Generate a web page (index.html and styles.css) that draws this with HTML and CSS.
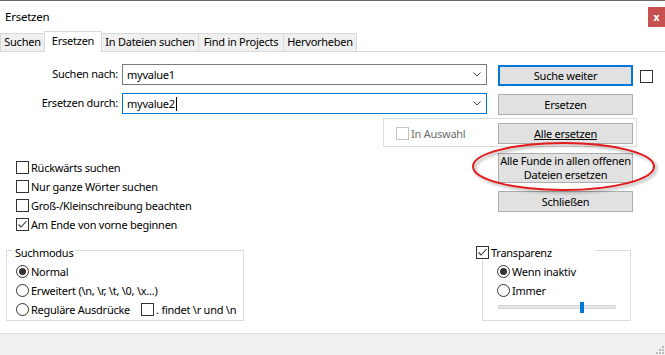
FILE: index.html
```html
<!DOCTYPE html>
<html lang="de">
<head>
<meta charset="utf-8">
<title>Ersetzen</title>
<link rel="stylesheet" href="styles.css">
</head>
<body>
<div class="window">
  <div class="topline"></div>
  <div class="titlebar">
    <span class="title">Ersetzen</span>
    <span class="close">x</span>
  </div>
  <div class="tabs">
    <div class="tab first w1">Suchen</div>
    <div class="tab active w2">Ersetzen</div>
    <div class="tab w3">In Dateien suchen</div>
    <div class="tab w4">Find in Projects</div>
    <div class="tab w5">Hervorheben</div>
  </div>
  <div class="main">
    <div class="row r1">
      <span class="lbl">Suchen nach:</span>
      <div class="combo"><span class="val">myvalue1</span><svg class="chev" width="8" height="5" viewBox="0 0 8 5"><path d="M0.5 0.5 L4 4 L7.5 0.5" fill="none" stroke="#444" stroke-width="1"/></svg></div>
      <div class="btn default">Suche weiter</div>
      <span class="cb"></span>
    </div>
    <div class="row r2">
      <span class="lbl">Ersetzen durch:</span>
      <div class="combo focus"><span class="val">myvalue2<span class="caret"></span></span><svg class="chev" width="8" height="5" viewBox="0 0 8 5"><path d="M0.5 0.5 L4 4 L7.5 0.5" fill="none" stroke="#444" stroke-width="1"/></svg></div>
      <div class="btn">Ersetzen</div>
    </div>
    <div class="selbox">
      <div class="opt sel"><span class="cb disabled"></span><span class="dis">In Auswahl</span></div>
      <div class="btn under">Alle ersetzen</div>
    </div>
    <div class="middle">
      <div class="checks">
        <div class="opt"><span class="cb"></span><span>Rückwärts suchen</span></div>
        <div class="opt"><span class="cb"></span><span>Nur ganze Wörter suchen</span></div>
        <div class="opt"><span class="cb"></span><span>Groß-/Kleinschreibung beachten</span></div>
        <div class="opt"><span class="cb checked"><svg width="11" height="11" viewBox="0 0 11 11"><path d="M1.5 5.5 L4 8 L9.5 2" fill="none" stroke="#333" stroke-width="1.1"/></svg></span><span>Am Ende von vorne beginnen</span></div>
      </div>
      <div class="side">
        <div class="btn tall"><span class="two">Alle Funde in allen offenen<br>Dateien ersetzen</span></div>
        <div class="btn">Schließen</div>
      </div>
    </div>
    <div class="bottom">
      <div class="group g1">
        <div class="legend l1">Suchmodus</div>
        <div class="opt first"><span class="rb on"></span><span>Normal</span></div>
        <div class="opt"><span class="rb"></span><span>Erweitert (\n, \r, \t, \0, \x...)</span></div>
        <div class="opt"><span class="rb"></span><span>Reguläre Ausdrücke</span><span class="cb gapcb"></span><span>. findet \r und \n</span></div>
      </div>
      <div class="group g2">
        <div class="legend l2"><span class="cb checked"><svg width="11" height="11" viewBox="0 0 11 11"><path d="M1.5 5.5 L4 8 L9.5 2" fill="none" stroke="#333" stroke-width="1.1"/></svg></span><span>Transparenz</span></div>
        <div class="opt first"><span class="rb on"></span><span>Wenn inaktiv</span></div>
        <div class="opt"><span class="rb"></span><span>Immer</span></div>
        <div class="slider"><span class="thumb"></span></div>
      </div>
    </div>
  </div>
  <div class="footer">
    <svg width="8" height="8" viewBox="0 0 8 8"><g fill="#b9b9b9"><rect x="6" y="0" width="2" height="2"/><rect x="3" y="3" width="2" height="2"/><rect x="6" y="3" width="2" height="2"/><rect x="0" y="6" width="2" height="2"/><rect x="3" y="6" width="2" height="2"/><rect x="6" y="6" width="2" height="2"/></g></svg>
  </div>
  <svg class="mark" width="192" height="58" viewBox="0 0 192 58"><ellipse cx="93.5" cy="27.5" rx="90.5" ry="23.5" fill="none" stroke="#e3191c" stroke-width="2"/></svg>
</div>
</body>
</html>
```
FILE: styles.css
```css
html, body {
  margin: 0;
  padding: 0;
}
body {
  font-family: "Noto Sans", "Open Sans", sans-serif;
  font-size: 11px;
  letter-spacing: -0.25px;
  color: #000;
  background: #fff;
}
.window {
  position: relative;
  width: 665px;
  height: 355px;
  display: flex;
  flex-direction: column;
  background: #fff;
  overflow: hidden;
}
.topline {
  height: 1px;
  background: #6b6b6b;
}
.titlebar {
  height: 30px;
  display: flex;
  justify-content: space-between;
  align-items: flex-start;
}
.title {
  padding-left: 5px;
  margin-top: 8px;
  line-height: 16px;
  font-size: 11.5px;
}
.close {
  width: 17px;
  height: 20px;
  margin-top: 6px;
  background: #c75050;
  color: #fff;
  font-weight: bold;
  font-size: 10px;
  letter-spacing: 0;
  display: flex;
  align-items: center;
  justify-content: center;
  font-family: "DejaVu Sans", sans-serif;
}
.tabs {
  display: flex;
  align-items: flex-end;
  height: 20px;
  border-bottom: 1px solid #d9d9d9;
}
.tab {
  box-sizing: border-box;
  height: 18px;
  border: 1px solid #d9d9d9;
  border-bottom: none;
  background: #f0f0f0;
  text-align: center;
  line-height: 16px;
  margin-left: -1px;
  white-space: nowrap;
}
.tab.first { margin-left: 0; }
.tab.active {
  height: 21px;
  margin-bottom: -1px;
  background: #fff;
  line-height: 18px;
  position: relative;
  z-index: 1;
}
.w1 { width: 45px; }
.w2 { width: 58px; }
.w3 { width: 98px; }
.w4 { width: 86px; }
.w5 { width: 74px; }

.main {
  flex: 1;
  display: flex;
  flex-direction: column;
}
.row {
  display: flex;
  align-items: flex-start;
  height: 22px;
}
.r1 { margin-top: 12px; }
.r2 { margin-top: 7px; }
.lbl {
  width: 118px;
  text-align: right;
  line-height: 20px;
  white-space: nowrap;
}
.combo {
  box-sizing: border-box;
  margin-left: 4px;
  width: 365px;
  height: 21px;
  border: 1px solid #7a7a7a;
  display: flex;
  align-items: center;
  padding: 0 5px 0 4px;
}
.combo.focus { border-color: #0078d7; }
.val {
  flex: 1;
  display: flex;
  align-items: center;
}
.caret {
  display: inline-block;
  width: 1px;
  height: 14px;
  background: #000;
  margin-left: 1px;
}
.btn {
  box-sizing: border-box;
  width: 135px;
  height: 21px;
  border: 1px solid #adadad;
  background: #e1e1e1;
  display: flex;
  align-items: center;
  justify-content: center;
  text-align: center;
  line-height: 14px;
  white-space: nowrap;
}
.btn.default { border: 2px solid #0078d7; }
.btn.under { text-decoration: underline; }
.btn.tall { height: 30px; }
.two { display: block; line-height: 14px; }
.row .btn {
  margin-left: 11px;
  margin-top: 1px;
}
.cb {
  box-sizing: border-box;
  width: 13px;
  height: 13px;
  border: 1px solid #333;
  background: #fff;
  flex: none;
  display: flex;
  align-items: center;
  justify-content: center;
}
.cb.disabled { border-color: #c4c4c4; }
.r1 .cb {
  margin-left: 7px;
  margin-top: 6px;
}
.selbox {
  box-sizing: border-box;
  margin: 3px 0 0 383px;
  width: 254px;
  height: 29px;
  border: 1px solid #dcdcdc;
  display: flex;
  align-items: flex-start;
  padding-right: 3px;
}
.opt {
  display: flex;
  align-items: center;
  height: 19px;
  gap: 2px;
  white-space: nowrap;
}
.opt.sel {
  margin: 5px 0 0 12px;
}
.dis { color: #6d6d6d; }
.selbox .btn {
  margin-left: auto;
  margin-top: 4px;
}
.middle {
  display: flex;
  align-items: flex-start;
}
.checks {
  width: 482px;
  padding-left: 16px;
  margin-top: 11px;
}
.side {
  margin-top: 6px;
  display: flex;
  flex-direction: column;
  gap: 8px;
}
.bottom {
  display: flex;
  align-items: flex-start;
  margin-top: 16px;
}
.group {
  box-sizing: border-box;
  height: 71px;
  border: 1px solid #dcdcdc;
  display: flex;
  flex-direction: column;
  align-items: flex-start;
}
.g1 {
  margin-left: 6px;
  width: 238px;
  padding-left: 9px;
}
.g2 {
  margin-left: 238px;
  width: 149px;
  padding-left: 14px;
}
.legend {
  display: flex;
  align-items: center;
  height: 14px;
  margin-top: -6px;
  background: #fff;
  white-space: nowrap;
  gap: 2px;
}
.l1 {
  margin-left: -3px;
  padding: 0 2px;
}
.l2 {
  margin-left: -21px;
  width: 119px;
}
.group .opt.first { margin-top: 3px; }
.gapcb { margin-left: 9px; }
.rb {
  box-sizing: border-box;
  width: 13px;
  height: 13px;
  border: 1px solid #333;
  border-radius: 50%;
  background: #fff;
  flex: none;
  display: flex;
  align-items: center;
  justify-content: center;
}
.rb.on::after {
  content: "";
  width: 7px;
  height: 7px;
  border-radius: 50%;
  background: #333;
}
.slider {
  position: relative;
  box-sizing: border-box;
  margin: 5px 0 0 1px;
  width: 118px;
  height: 4px;
  background: #e7e7e7;
  border: 1px solid #d6d6d6;
}
.thumb {
  position: absolute;
  left: 81px;
  top: -4px;
  width: 4px;
  height: 11px;
  background: #0078d7;
}
.footer {
  box-sizing: border-box;
  height: 22px;
  border-top: 1px solid #dadada;
  background: #f0f0f0;
  display: flex;
  justify-content: flex-end;
  align-items: flex-end;
  padding: 0 1px 1px 0;
}
.mark {
  position: absolute;
  left: 470px;
  top: 139px;
  filter: drop-shadow(2px 2px 1.5px rgba(0, 0, 0, 0.35));
  pointer-events: none;
}
```
